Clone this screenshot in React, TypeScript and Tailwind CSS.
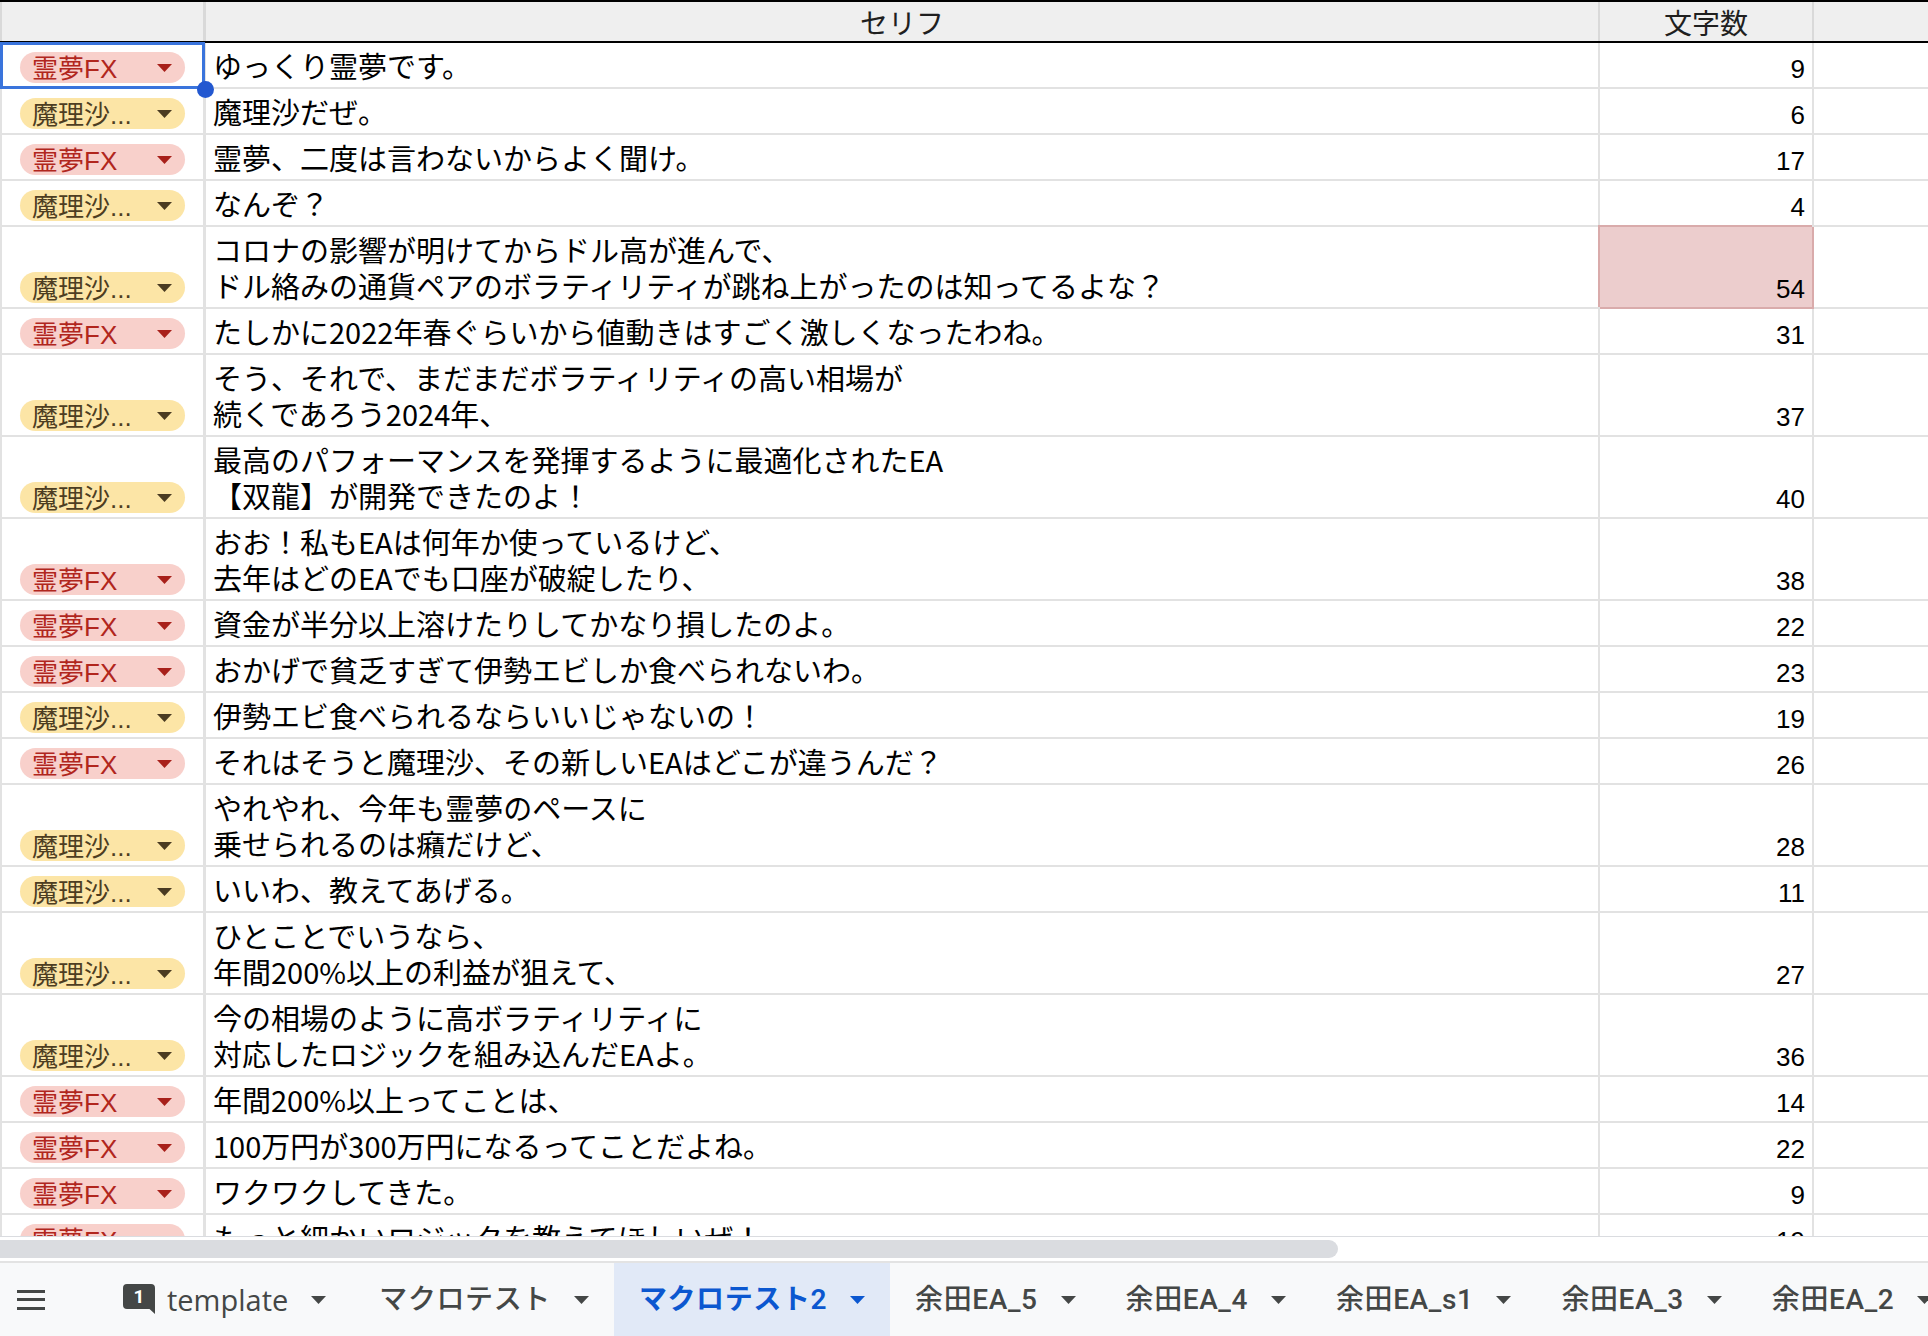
type Who = 'r' | 'm';

type Row = { who: Who; lines: string[]; n: number; hl?: boolean };

const rows: Row[] = [
  { who: 'r', lines: ['ゆっくり霊夢です。'], n: 9 },
  { who: 'm', lines: ['魔理沙だぜ。'], n: 6 },
  { who: 'r', lines: ['霊夢、二度は言わないからよく聞け。'], n: 17 },
  { who: 'm', lines: ['なんぞ？'], n: 4 },
  {
    who: 'm',
    lines: ['コロナの影響が明けてからドル高が進んで、', 'ドル絡みの通貨ペアのボラティリティが跳ね上がったのは知ってるよな？'],
    n: 54,
    hl: true,
  },
  { who: 'r', lines: ['たしかに2022年春ぐらいから値動きはすごく激しくなったわね。'], n: 31 },
  { who: 'm', lines: ['そう、それで、まだまだボラティリティの高い相場が', '続くであろう2024年、'], n: 37 },
  { who: 'm', lines: ['最高のパフォーマンスを発揮するように最適化されたEA', '【双龍】が開発できたのよ！'], n: 40 },
  { who: 'r', lines: ['おお！私もEAは何年か使っているけど、', '去年はどのEAでも口座が破綻したり、'], n: 38 },
  { who: 'r', lines: ['資金が半分以上溶けたりしてかなり損したのよ。'], n: 22 },
  { who: 'r', lines: ['おかげで貧乏すぎて伊勢エビしか食べられないわ。'], n: 23 },
  { who: 'm', lines: ['伊勢エビ食べられるならいいじゃないの！'], n: 19 },
  { who: 'r', lines: ['それはそうと魔理沙、その新しいEAはどこが違うんだ？'], n: 26 },
  { who: 'm', lines: ['やれやれ、今年も霊夢のペースに', '乗せられるのは癪だけど、'], n: 28 },
  { who: 'm', lines: ['いいわ、教えてあげる。'], n: 11 },
  { who: 'm', lines: ['ひとことでいうなら、', '年間200%以上の利益が狙えて、'], n: 27 },
  { who: 'm', lines: ['今の相場のように高ボラティリティに', '対応したロジックを組み込んだEAよ。'], n: 36 },
  { who: 'r', lines: ['年間200%以上ってことは、'], n: 14 },
  { who: 'r', lines: ['100万円が300万円になるってことだよね。'], n: 22 },
  { who: 'r', lines: ['ワクワクしてきた。'], n: 9 },
  { who: 'r', lines: ['もっと細かいロジックを教えてほしいぜ！'], n: 19 },
];

const tabs = ['マクロテスト', 'マクロテスト2', '余田EA_5', '余田EA_4', '余田EA_s1', '余田EA_3', '余田EA_2'];

function Caret({ className }: { className: string }) {
  return (
    <svg width="15" height="8" viewBox="0 0 15 8" className={className}>
      <polygon points="0,0 15,0 7.5,8" fill="currentColor" />
    </svg>
  );
}

function Chip({ who }: { who: Who }) {
  if (who === 'r') {
    return (
      <div className="flex h-[31px] w-[165px] items-center justify-between rounded-full bg-[#f8d0cb] pl-[12px] pr-[13px] text-[#b1261d]">
        <span className="text-[26px] leading-none">
          霊夢<span className="font-['Liberation_Sans']">FX</span>
        </span>
        <Caret className="text-[#a8201a]" />
      </div>
    );
  }
  return (
    <div className="flex h-[31px] w-[165px] items-center justify-between rounded-full bg-[#fce5a6] pl-[12px] pr-[13px] text-[#4d3d22]">
      <span className="text-[26px] leading-none">
        魔理沙<span className="font-['Liberation_Sans']">...</span>
      </span>
      <Caret className="text-[#4a3b22]" />
    </div>
  );
}

function SheetRow({ row }: { row: Row }) {
  const tall = row.lines.length > 1;
  return (
    <div className={`flex ${tall ? 'h-[82px]' : 'h-[46px]'}`}>
      <div className="flex w-[206px] shrink-0 items-end border-b-2 border-l-2 border-r-[3px] border-[#e2e2e2] pb-[4px] pl-[18px]">
        <Chip who={row.who} />
      </div>
      <div className="flex w-[1394px] shrink-0 flex-col justify-center border-b-2 border-r-2 border-[#e2e2e2] pl-[7px] text-[29px] leading-[36px] text-black">
        {row.lines.map((l) => (
          <div key={l} className="whitespace-nowrap">
            {l}
          </div>
        ))}
      </div>
      <div
        className={`flex w-[214px] shrink-0 items-end justify-end border-b-2 border-r-2 pb-[5px] pr-[7px] font-['Liberation_Sans'] text-[26px] leading-[26px] text-black ${
          row.hl ? 'border-[#d9abab] bg-[#eccdcd] shadow-[-2px_-2px_0_0_#d9abab]' : 'border-[#e2e2e2]'
        }`}
      >
        {row.n}
      </div>
      <div className="flex-1 border-b-2 border-[#e2e2e2]" />
    </div>
  );
}

export default function App() {
  return (
    <div className="flex h-[1336px] w-[1928px] flex-col overflow-hidden bg-white font-['Noto_Sans_CJK_JP',sans-serif]">
      {/* grid */}
      <div className="relative h-[1237px] shrink-0 overflow-hidden border-b border-[#dadce0]">
        <div className="flex h-[43px] border-y-2 border-black bg-[#efefef] text-[28px] text-[#1f1f1f]">
          <div className="w-[206px] shrink-0 border-l-2 border-r-[3px] border-[#d9d9d9]" />
          <div className="flex w-[1394px] shrink-0 items-center justify-center border-r-2 border-[#d9d9d9] leading-none">
            セリフ
          </div>
          <div className="flex w-[214px] shrink-0 items-center justify-center border-r-2 border-[#d9d9d9] leading-none">
            文字数
          </div>
          <div className="flex-1" />
        </div>
        {rows.map((r, i) => (
          <SheetRow key={i} row={r} />
        ))}

        {/* active cell */}
        <div className="absolute left-0 top-[42px] h-[47px] w-[205px] border-[3px] border-[#3a74dc]" />
        <div className="absolute left-[197px] top-[81px] h-[17px] w-[17px] rounded-full bg-[#2358d0]" />
      </div>

      {/* horizontal scrollbar */}
      <div className="h-[24px] shrink-0 pt-[3px]">
        <div className="h-[18px] w-[1338px] rounded-r-full bg-[#dadce0]" />
      </div>

      {/* sheet tabs */}
      <div className="flex h-[75px] shrink-0 items-stretch border-t-2 border-[#e3e3e3] bg-[#f8f9fa] text-[28px] text-[#444746]">
        <div className="flex w-[98px] shrink-0 items-center pl-[17px]">
          <div className="flex w-[28px] flex-col gap-[5.5px]">
            <div className="h-[3px] bg-[#444746]" />
            <div className="h-[3px] bg-[#444746]" />
            <div className="h-[3px] bg-[#444746]" />
          </div>
        </div>

        <div className="flex shrink-0 items-center pl-[25px] pr-[28px]">
          <div className="relative mr-[12px] h-[31px] w-[32px]">
            <svg width="32" height="31" viewBox="0 0 32 31">
              <path d="M4 0H28A4 4 0 0 1 32 4V30L26.5 25H4A4 4 0 0 1 0 21V4A4 4 0 0 1 4 0Z" fill="#444746" />
            </svg>
            <span className="absolute left-0 top-0 flex h-[25px] w-[32px] items-center justify-center font-['Roboto'] text-[19px] font-bold leading-none text-white">
              1
            </span>
          </div>
          <span className="font-['Open_Sans','Noto_Sans_CJK_JP',sans-serif] text-[29px] font-medium leading-none">template</span>
          <Caret className="ml-[23px] text-[#444746]" />
        </div>

        {tabs.map((t) => {
          const active = t === 'マクロテスト2';
          return (
            <div
              key={t}
              className={`flex shrink-0 items-center gap-[23px] px-[25px] ${active ? 'bg-[#e1e9f7] text-[#0b57d0]' : ''}`}
            >
              <span
                className={`whitespace-nowrap font-['Roboto','Noto_Sans_CJK_JP',sans-serif] leading-none tracking-[0.6px] ${
                  active ? 'font-semibold' : 'font-medium'
                }`}
              >
                {t}
              </span>
              <Caret className={active ? 'text-[#0b57d0]' : 'text-[#444746]'} />
            </div>
          );
        })}
      </div>
    </div>
  );
}
